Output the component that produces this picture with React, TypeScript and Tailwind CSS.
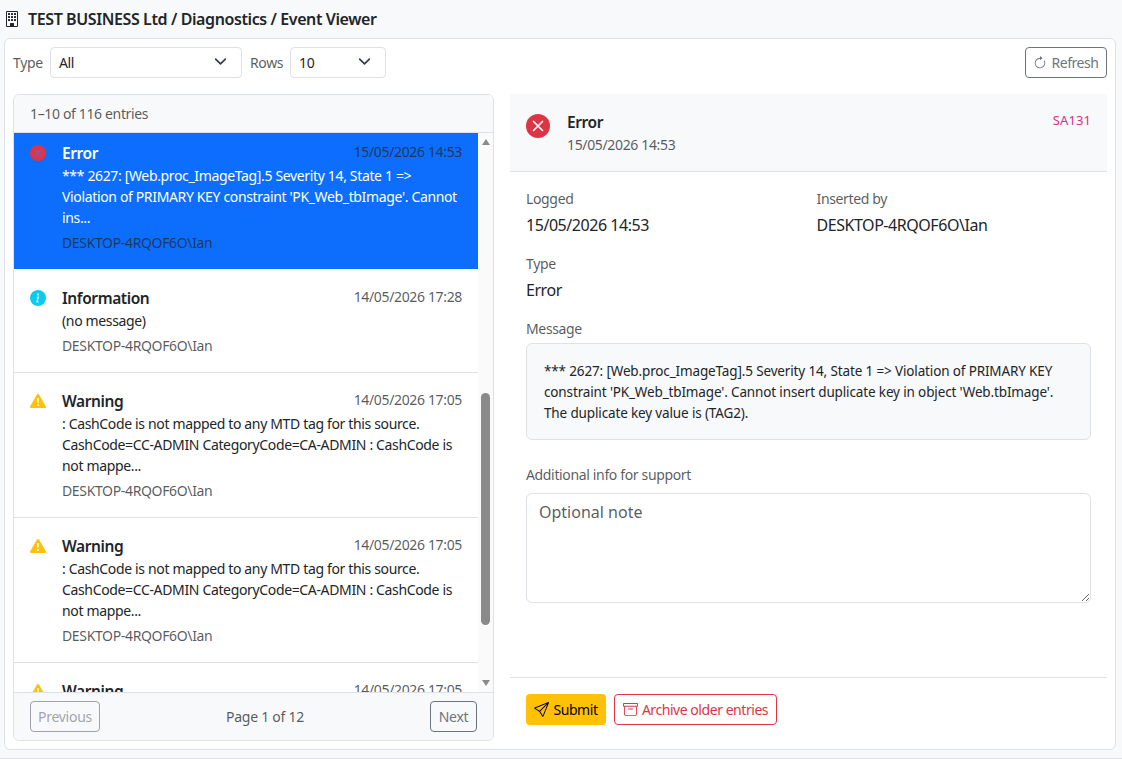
import React from "react";

const Err = ({ size, x }: { size: number; x: string }) => (
  <svg width={size} height={size} viewBox="0 0 16 16" className="shrink-0">
    <circle cx="8" cy="8" r="8" fill="#dc3545" />
    <path d="M5 5l6 6M11 5l-6 6" stroke={x} strokeWidth="1.1" strokeLinecap="round" />
  </svg>
);
const Info = () => (
  <svg width="16" height="16" viewBox="0 0 16 16" className="shrink-0">
    <circle cx="8" cy="8" r="8" fill="#0dcaf0" />
    <path fill="#fff" d="m8.93 6.588-2.29.287-.082.38.45.083c.294.07.352.176.288.469l-.738 3.468c-.194.897.105 1.319.808 1.319.545 0 1.178-.252 1.465-.598l.088-.416c-.2.176-.492.246-.686.246-.275 0-.375-.193-.304-.533zM9 4.5a1 1 0 1 1-2 0 1 1 0 0 1 2 0" />
  </svg>
);
const Warn = () => (
  <svg width="16" height="16" viewBox="0 0 16 16" className="shrink-0">
    <path fill="#ffc107" d="M8.982 1.566a1.13 1.13 0 0 0-1.96 0L.165 13.233c-.457.778.091 1.767.98 1.767h13.713c.889 0 1.438-.99.98-1.767zM8 5c.535 0 .954.462.9.995l-.35 3.507a.552.552 0 0 1-1.1 0L7.1 5.995A.905.905 0 0 1 8 5m.002 6a1 1 0 1 1 0 2 1 1 0 0 1 0-2" />
  </svg>
);
const Chevron = () => (
  <svg width="13" height="13" viewBox="0 0 16 16" fill="none" stroke="#343a40" strokeWidth="2" strokeLinecap="round" strokeLinejoin="round" className="shrink-0 -translate-y-px">
    <path d="m2 5 6 6 6-6" />
  </svg>
);

const warnMsg = ": CashCode is not mapped to any MTD tag for this source. CashCode=CC-ADMIN CategoryCode=CA-ADMIN : CashCode is not mappe...";

function Row({ icon, title, time, msg, active, h, pt }: { icon: React.ReactNode; title: string; time: string; msg?: string; active?: boolean; h: string; pt: string }) {
  return (
    <div className={`${h} ${pt} shrink-0 flex gap-[16px] pl-[16px] pr-[16px] border-b tracking-[-0.35px] ${active ? "bg-[#0d6efd] border-[#0d6efd] text-white" : "bg-white border-[#dee2e6] text-[#212529]"}`}>
      <div className="pt-[4px]">{icon}</div>
      <div className="flex-1 min-w-0">
        <div className="flex justify-between items-start">
          <span className="text-[15.5px] font-semibold leading-[24px] tracking-[-0.4px]">{title}</span>
          <span className="text-[14px] leading-[21px] text-[#212529]/75">{time}</span>
        </div>
        {msg && <div className="text-[14px] leading-[21px]">{msg}</div>}
        <div className="text-[14px] leading-[21px] mt-[4px] text-[#212529]/75">DESKTOP-4RQOF6O\Ian</div>
      </div>
    </div>
  );
}

export default function App() {
  return (
    <div className="h-[759px] overflow-hidden bg-[#f8f9fa] border-b border-[#dee2e6] text-[#212529] text-[14px] font-['Noto_Sans','Open_Sans',sans-serif]">
      <div className="h-[38px] flex items-center gap-[8px] pl-[4px] text-[16px] font-semibold tracking-[-0.4px]">
        <svg width="16" height="16" viewBox="0 0 16 16" fill="#212529">
          <path d="M4 2.5a.5.5 0 0 1 .5-.5h1a.5.5 0 0 1 .5.5v1a.5.5 0 0 1-.5.5h-1a.5.5 0 0 1-.5-.5zm3 0a.5.5 0 0 1 .5-.5h1a.5.5 0 0 1 .5.5v1a.5.5 0 0 1-.5.5h-1a.5.5 0 0 1-.5-.5zm3.5-.5a.5.5 0 0 0-.5.5v1a.5.5 0 0 0 .5.5h1a.5.5 0 0 0 .5-.5v-1a.5.5 0 0 0-.5-.5zM4 5.5a.5.5 0 0 1 .5-.5h1a.5.5 0 0 1 .5.5v1a.5.5 0 0 1-.5.5h-1a.5.5 0 0 1-.5-.5zM7.5 5a.5.5 0 0 0-.5.5v1a.5.5 0 0 0 .5.5h1a.5.5 0 0 0 .5-.5v-1a.5.5 0 0 0-.5-.5zm2.5.5a.5.5 0 0 1 .5-.5h1a.5.5 0 0 1 .5.5v1a.5.5 0 0 1-.5.5h-1a.5.5 0 0 1-.5-.5zM4.5 8a.5.5 0 0 0-.5.5v1a.5.5 0 0 0 .5.5h1a.5.5 0 0 0 .5-.5v-1a.5.5 0 0 0-.5-.5zm2.5.5a.5.5 0 0 1 .5-.5h1a.5.5 0 0 1 .5.5v1a.5.5 0 0 1-.5.5h-1a.5.5 0 0 1-.5-.5zm3.5-.5a.5.5 0 0 0-.5.5v1a.5.5 0 0 0 .5.5h1a.5.5 0 0 0 .5-.5v-1a.5.5 0 0 0-.5-.5z" />
          <path d="M2 1a1 1 0 0 1 1-1h10a1 1 0 0 1 1 1v14a1 1 0 0 1-1 1H3a1 1 0 0 1-1-1zm11 0H3v14h3v-2.5a.5.5 0 0 1 .5-.5h3a.5.5 0 0 1 .5.5V15h3z" />
        </svg>
        <span>TEST BUSINESS Ltd / Diagnostics / Event Viewer</span>
      </div>

      <div className="ml-[4px] mr-[6px] h-[712px] bg-white border border-[#dee2e6] rounded-[6px] px-[8px] pt-[8px] flex flex-col">
        <div className="h-[31px] flex items-center tracking-[-0.35px]">
          <span className="w-[29px] text-[#212529]/75">Type</span>
          <div className="ml-[8px] w-[192px] h-[31px] border border-[#dee2e6] rounded-[4px] flex items-center justify-between pl-[8px] pr-[14px]">
            <span>All</span><Chevron />
          </div>
          <span className="ml-[8px] w-[32px] text-[#212529]/75">Rows</span>
          <div className="ml-[8px] w-[96px] h-[31px] border border-[#dee2e6] rounded-[4px] flex items-center justify-between pl-[8px] pr-[14px]">
            <span>10</span><Chevron />
          </div>
          <button className="ml-auto w-[82px] h-[31px] border border-[#6c757d] rounded-[4px] flex items-center justify-center gap-[4px] text-[#6c757d] tracking-[-0.45px]">
            <svg width="14" height="14" viewBox="0 0 16 16" fill="#6c757d">
              <path fillRule="evenodd" d="M8 3a5 5 0 1 0 4.546 2.914.5.5 0 0 1 .908-.417A6 6 0 1 1 8 2z" />
              <path d="M8 4.466V.534a.25.25 0 0 1 .41-.192l2.36 1.966c.12.1.12.284 0 .384L8.41 4.658A.25.25 0 0 1 8 4.466" />
            </svg>
            Refresh
          </button>
        </div>

        <div className="mt-[16px] flex gap-[16px] h-[647px]">
          <div className="w-[481px] shrink-0 border border-[#dee2e6] rounded-[6px] overflow-hidden flex flex-col">
            <div className="h-[38px] shrink-0 bg-[#f8f9fa] border-b border-[#dee2e6] flex items-center pl-[16px] text-[14px] text-[#212529]/75 tracking-[-0.35px]">1–10 of 116 entries</div>
            <div className="flex-1 min-h-0 flex">
              <div className="flex-1 min-w-0 overflow-hidden flex flex-col">
                <Row active h="h-[136px]" pt="pt-[8px]" icon={<Err size={16} x="#7a5ad0" />} title="Error" time="15/05/2026 14:53" msg="*** 2627: [Web.proc_ImageTag].5 Severity 14, State 1 => Violation of PRIMARY KEY constraint 'PK_Web_tbImage'. Cannot ins..." />
                <Row h="h-[104px]" pt="pt-[17px]" icon={<Info />} title="Information" time="14/05/2026 17:28" msg="(no message)" />
                <Row h="h-[145px]" pt="pt-[16px]" icon={<Warn />} title="Warning" time="14/05/2026 17:05" msg={warnMsg} />
                <Row h="h-[145px]" pt="pt-[16px]" icon={<Warn />} title="Warning" time="14/05/2026 17:05" msg={warnMsg} />
                <Row h="h-[145px]" pt="pt-[16px]" icon={<Warn />} title="Warning" time="14/05/2026 17:05" msg={warnMsg} />
              </div>
              <div className="w-[15px] shrink-0 bg-[#fafafa] flex flex-col items-center pt-[6px]">
                <div className="w-0 h-0 border-x-[4px] border-x-transparent border-b-[6px] border-b-[#8a8a8a]" />
                <div className="mt-[248px] w-[9px] h-[232px] rounded-full bg-[#8a8a8a]" />
                <div className="mt-[55px] w-0 h-0 border-x-[4px] border-x-transparent border-t-[6px] border-t-[#8a8a8a]" />
              </div>
            </div>
            <div className="h-[48px] shrink-0 bg-[#f8f9fa] border-t border-[#dee2e6] flex items-center justify-between pl-[16px] pr-[16px] tracking-[-0.25px]">
              <button className="w-[70px] h-[31px] border border-[#6c757d]/65 rounded-[4px] text-[#6c757d]/65">Previous</button>
              <span className="text-[#212529]/75">Page 1 of 12</span>
              <button className="w-[47px] h-[31px] border border-[#6c757d] rounded-[4px] text-[#6c757d]">Next</button>
            </div>
          </div>

          <div className="flex-1 min-w-0 flex flex-col tracking-[-0.35px]">
            <div className="h-[78px] shrink-0 bg-[#f8f9fa] border-b border-[#dee2e6] flex justify-between pl-[16px] pr-[16px] pt-[16px]">
              <div className="flex gap-[17px]">
                <div className="pt-[4px]"><Err size={24} x="#ffffff" /></div>
                <div>
                  <div className="text-[15.5px] tracking-[-0.4px] font-semibold leading-[24px]">Error</div>
                  <div className="text-[14px] leading-[20px] mt-[1px] text-[#212529]/75">15/05/2026 14:53</div>
                </div>
              </div>
              <span className="text-[13px] leading-[20px] text-[#d63384] tracking-[0.1px]">SA131</span>
            </div>

            <div className="flex-1 min-h-0 px-[16px] pt-[16px]">
              <div className="grid grid-cols-2 gap-x-[16px]">
                <div>
                  <div className="leading-[21px] text-[#212529]/75">Logged</div>
                  <div className="leading-[21px] mt-[6px] text-[16px] tracking-[-0.45px]">15/05/2026 14:53</div>
                </div>
                <div>
                  <div className="leading-[21px] text-[#212529]/75">Inserted by</div>
                  <div className="leading-[21px] mt-[6px] text-[16px] tracking-[-0.45px]">DESKTOP-4RQOF6O\Ian</div>
                </div>
              </div>
              <div className="mt-[17px] leading-[21px] text-[#212529]/75">Type</div>
              <div className="leading-[21px] mt-[6px] text-[16px] tracking-[-0.45px]">Error</div>
              <div className="mt-[17px] leading-[21px] text-[#212529]/75">Message</div>
              <div className="mt-[4px] h-[97px] bg-[#f8f9fa] border border-[#dee2e6] rounded-[6px] px-[17px] pt-[17px] text-[13.5px] leading-[21px] tracking-[-0.14px]">
                *** 2627: [Web.proc_ImageTag].5 Severity 14, State 1 =&gt; Violation of PRIMARY KEY constraint 'PK_Web_tbImage'. Cannot insert duplicate key in object 'Web.tbImage'.<br />The duplicate key value is (TAG2).
              </div>
              <div className="mt-[24px] leading-[21px] text-[#212529]/75">Additional info for support</div>
              <textarea readOnly placeholder="Optional note" className="mt-[8px] block w-full h-[110px] border border-[#dee2e6] rounded-[6px] px-[12px] py-[6px] text-[16px] leading-[24px] tracking-normal placeholder:text-[#212529]/75 outline-none resize-y" />
            </div>

            <div className="h-[64px] shrink-0 border-t border-[#dee2e6] flex items-start gap-[8px] pl-[16px] pt-[16px] tracking-[-0.45px]">
              <button className="w-[80px] h-[31px] bg-[#ffc107] rounded-[4px] flex items-center justify-center gap-[4px] text-black">
                <svg width="15" height="15" viewBox="0 0 16 16" fill="#000"><path d="M15.854.146a.5.5 0 0 1 .11.54l-5.819 14.547a.75.75 0 0 1-1.329.124l-3.178-4.995L.643 7.184a.75.75 0 0 1 .124-1.33L15.314.037a.5.5 0 0 1 .54.11ZM6.636 10.07l2.761 4.338L14.13 2.576zm6.787-8.201L1.591 6.602l4.339 2.76z" /></svg>
                Submit
              </button>
              <button className="w-[163px] h-[31px] border border-[#dc3545] rounded-[4px] flex items-center justify-center gap-[4px] text-[#dc3545]">
                <svg width="15" height="15" viewBox="0 0 16 16" fill="#dc3545"><path d="M0 2a1 1 0 0 1 1-1h14a1 1 0 0 1 1 1v2a1 1 0 0 1-1 1v7.5a2.5 2.5 0 0 1-2.5 2.5h-9A2.5 2.5 0 0 1 1 12.5V5a1 1 0 0 1-1-1zm2 3v7.5A1.5 1.5 0 0 0 3.5 14h9a1.5 1.5 0 0 0 1.5-1.5V5zm13-3H1v2h14zM5 7.5a.5.5 0 0 1 .5-.5h5a.5.5 0 0 1 0 1h-5a.5.5 0 0 1-.5-.5" /></svg>
                Archive older entries
              </button>
            </div>
          </div>
        </div>
      </div>
    </div>
  );
}
